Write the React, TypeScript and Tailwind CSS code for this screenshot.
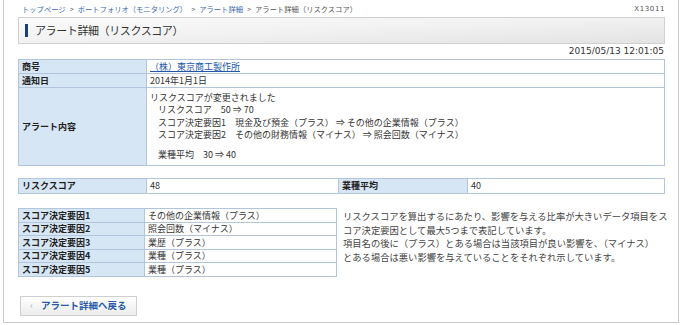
import React from "react";

const jp = "font-['Noto_Sans_CJK_JP',sans-serif]";

interface RowProps {
    label: string;
    children: React.ReactNode;
    first?: boolean;
    height: string;
    labelWidth: string;
}

const Row: React.FC<RowProps> = ({ label, children, first, height, labelWidth }) => (
    <div className={`flex ${first ? "" : "border-t border-[#b3c5db]"}`}>
        <div className={`${labelWidth} ${height} shrink-0 flex items-center pl-[3px] bg-[#d7e6f4] border-r border-[#b3c5db] font-bold text-[#222]`}>
            {label}
        </div>
        <div className={`flex-1 ${height} pl-[3px] flex items-center bg-white`}>{children}</div>
    </div>
);

const factors = [
    ["スコア決定要因1", "その他の企業情報（プラス）"],
    ["スコア決定要因2", "照会回数（マイナス）"],
    ["スコア決定要因3", "業歴（プラス）"],
    ["スコア決定要因4", "業種（プラス）"],
    ["スコア決定要因5", "業種（プラス）"],
];

const Sep: React.FC = () => <span className="text-[#666] mx-[4px]">&gt;</span>;

const App: React.FC = () => {
    return (
        <div className={`w-[680px] h-[325px] bg-white pl-[3px] ${jp} text-[#333]`}>
            <div className="w-[676px] h-[323px] border-x border-b border-[#cbcbcb] pl-[14px] pr-[13px]">
                {/* breadcrumb */}
                <div className="flex justify-between items-center h-[17px] pt-[1px] pl-[4px]">
                    <p className="text-[7.3px] whitespace-nowrap">
                        <span className="text-[#3a68ad]">トップページ</span>
                        <Sep />
                        <span className="text-[#3a68ad]">ポートフォリオ（モニタリング）</span>
                        <Sep />
                        <span className="text-[#3a68ad]">アラート詳細</span>
                        <Sep />
                        <span className="text-[#555]">アラート詳細（リスクスコア）</span>
                    </p>
                    <p className="font-['DejaVu_Sans',sans-serif] text-[7px] tracking-[0.6px] text-[#555]">X13011</p>
                </div>

                {/* title */}
                <div className="h-[27px] flex items-center border border-[#d0d0d0] bg-gradient-to-br from-[#fbfbfb] via-[#f1f1f1] to-[#e3e3e3] pl-[6px]">
                    <span className="w-[3px] h-[13px] bg-[#1c3f78] mr-[7px]" />
                    <h1 className="text-[11px] tracking-[-0.4px] text-[#333]">アラート詳細（リスクスコア）</h1>
                </div>

                <p className="font-['DejaVu_Sans',sans-serif] text-[9px] text-right h-[15px] leading-[15px] pr-[1px] text-[#333]">
                    2015/05/13 12:01:05
                </p>

                {/* alert detail */}
                <div className="border border-[#b3c5db] text-[9px]">
                    <Row first label="商号" height="h-[13px]" labelWidth="w-[128px]">
                        <a className="text-[#2456a6] underline">（株）東京商工製作所</a>
                    </Row>
                    <Row label="通知日" height="h-[13px]" labelWidth="w-[128px]">
                        2014年1月1日
                    </Row>
                    <Row label="アラート内容" height="h-[77px]" labelWidth="w-[128px]">
                        <div className="flex flex-col leading-[12.3px] self-start pt-[4px]">
                            <p>リスクスコアが変更されました</p>
                            <p className="pl-[8px]">リスクスコア　50 ⇒ 70</p>
                            <p className="pl-[8px]">スコア決定要因1　現金及び預金（プラス） ⇒ その他の企業情報（プラス）</p>
                            <p className="pl-[8px]">スコア決定要因2　その他の財務情報（マイナス） ⇒ 照会回数（マイナス）</p>
                            <p className="pl-[8px] mt-[8px]">業種平均　30 ⇒ 40</p>
                        </div>
                    </Row>
                </div>

                {/* score */}
                <div className="mt-[12px] border border-[#b3c5db] flex text-[9px] h-[16px]">
                    <div className="w-[128px] shrink-0 bg-[#d7e6f4] border-r border-[#b3c5db] pl-[3px] flex items-center font-bold text-[#222]">リスクスコア</div>
                    <div className="w-[192px] shrink-0 border-r border-[#b3c5db] pl-[3px] flex items-center">48</div>
                    <div className="w-[129px] shrink-0 bg-[#d7e6f4] border-r border-[#b3c5db] pl-[3px] flex items-center font-bold text-[#222]">業種平均</div>
                    <div className="flex-1 pl-[3px] flex items-center">40</div>
                </div>

                {/* factors */}
                <div className="mt-[14px] flex">
                    <div className="w-[319px] shrink-0 border border-[#b3c5db] text-[9px]">
                        {factors.map(([label, value], i) => (
                            <Row key={label} first={i === 0} label={label} height="h-[12.5px]" labelWidth="w-[126px]">
                                {value}
                            </Row>
                        ))}
                    </div>
                    <p className="ml-[6px] pt-[2px] text-[9.3px] leading-[13.5px] whitespace-nowrap text-[#444]">
                        リスクスコアを算出するにあたり、影響を与える比率が大きいデータ項目をス<br />
                        コア決定要因として最大5つまで表記しています。<br />
                        項目名の後に（プラス）とある場合は当該項目が良い影響を、（マイナス）<br />
                        とある場合は悪い影響を与えていることをそれぞれ示しています。
                    </p>
                </div>

                {/* back button */}
                <button className="mt-[19px] ml-[2px] w-[117px] h-[20px] border border-[#cfcfcf] bg-gradient-to-b from-white to-[#ececec] flex items-center pl-[9px] text-[9.5px]">
                    <span className="text-[#b0b0b0] mr-[8px]">‹</span>
                    <span className="text-[#2a5aa8] font-bold">アラート詳細へ戻る</span>
                </button>
            </div>
        </div>
    );
};

export default App;
